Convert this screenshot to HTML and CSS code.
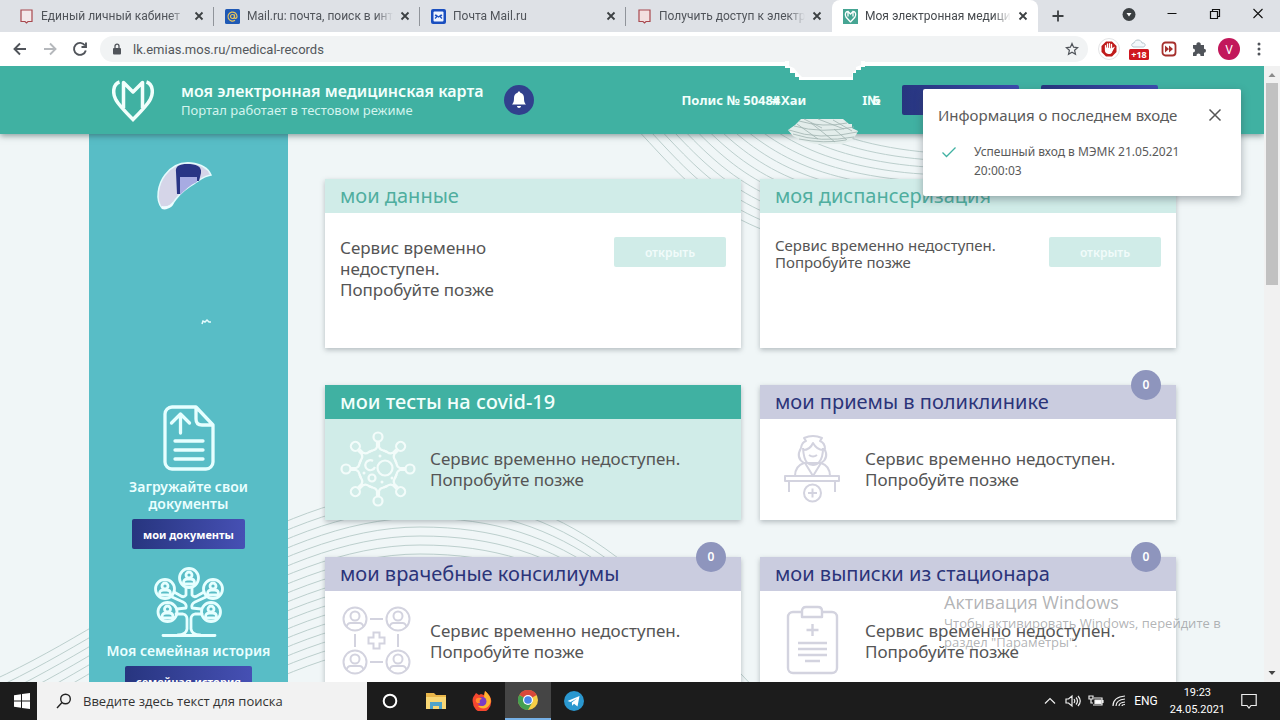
FILE: index.html
```html
<!DOCTYPE html>
<html lang="ru">
<head>
<meta charset="utf-8">
<title>Моя электронная медицинская карта</title>
<link rel="stylesheet" href="styles.css">
</head>
<body>
<div class="tabs">
  <div class="tab">
    <svg class="fav" viewBox="0 0 15 15"><path d="M2 1h11v11.500H9l-1.500 1.500L6 12.500H2z" fill="#f3e9ea" stroke="#a8484e" stroke-width="1.200"/></svg>
    <span class="tab-title">Единый личный кабинет</span>
    <button class="x" aria-label="Закрыть"><svg viewBox="0 0 10 10"><path d="M1.500 1.500l7 7m0-7l-7 7"/></svg></button>
  </div>
  <div class="tab">
    <svg class="fav" viewBox="0 0 15 15"><rect width="15" height="15" rx="1.500" fill="#1f59b5"/><g fill="none" stroke="#e8c35c" stroke-width="1.200"><circle cx="7.500" cy="7.500" r="2"/><path d="M9.500 5.500v2.800c0 1.700 2.500 1.400 2.500-.8a4.500 4.500 0 1 0-2 3.800"/></g></svg>
    <span class="tab-title">Mail.ru: почта, поиск в интернете</span>
    <button class="x" aria-label="Закрыть"><svg viewBox="0 0 10 10"><path d="M1.500 1.500l7 7m0-7l-7 7"/></svg></button>
  </div>
  <div class="tab">
    <svg class="fav" viewBox="0 0 15 15"><rect width="15" height="15" rx="2" fill="#1a4fc0"/><rect x="2.500" y="2.500" width="10" height="10" rx="1" fill="#eef4ff"/><path d="M4 6l2 1.500L4 9.500M11 6L9 7.500l2 2M4.500 5.800L7.500 8l3-2.200" fill="none" stroke="#1a4fc0" stroke-width="1.200"/></svg>
    <span class="tab-title">Почта Mail.ru</span>
    <button class="x" aria-label="Закрыть"><svg viewBox="0 0 10 10"><path d="M1.500 1.500l7 7m0-7l-7 7"/></svg></button>
  </div>
  <div class="tab last">
    <svg class="fav" viewBox="0 0 15 15"><path d="M2 1h11v11.500H9l-1.500 1.500L6 12.500H2z" fill="#f3e0e0" stroke="#a8484e" stroke-width="1.200"/></svg>
    <span class="tab-title">Получить доступ к электронной</span>
    <button class="x" aria-label="Закрыть"><svg viewBox="0 0 10 10"><path d="M1.500 1.500l7 7m0-7l-7 7"/></svg></button>
  </div>
  <div class="tab active">
    <svg class="fav" viewBox="0 0 15 15"><rect width="15" height="15" fill="#46a593"/><path d="M7.500 13L3 8C1.500 5.500 2.500 2.500 5 2.500v5m5 0v-5c2.500 0 3.500 3 2 5.500L7.500 13M5 2.500L7.500 5 10 2.500" fill="none" stroke="#fff" stroke-width="1.300"/></svg>
    <span class="tab-title">Моя электронная медицинская</span>
    <button class="x" aria-label="Закрыть"><svg viewBox="0 0 10 10"><path d="M1.500 1.500l7 7m0-7l-7 7"/></svg></button>
  </div>
  <button class="newtab" aria-label="Новая вкладка"><svg viewBox="0 0 12 12"><path d="M6 .5v11M.5 6h11" stroke="#3c4043" stroke-width="1.800"/></svg></button>
  <div class="window-buttons">
    <button aria-label="Поиск вкладок"><svg viewBox="0 0 14 14"><circle cx="7" cy="7.500" r="6.500" fill="#3c4043"/><path d="M4.500 6h5L7 9.500z" fill="#fff"/></svg></button>
    <button aria-label="Свернуть"><svg viewBox="0 0 14 14"><path d="M2.500 6.500h9" stroke="#111"/></svg></button>
    <button aria-label="Развернуть"><svg viewBox="0 0 14 14" fill="none" stroke="#111" stroke-width="1.200"><path d="M2.500 4.500h7v7h-7zM4.500 4.500v-2h7v7h-2"/></svg></button>
    <button aria-label="Закрыть окно"><svg viewBox="0 0 14 14"><path d="M2.500 2l9 9m0-9l-9 9" stroke="#111" stroke-width="1.100"/></svg></button>
  </div>
</div>
<div class="toolbar">
  <button class="nav" aria-label="Назад"><svg viewBox="0 0 16 16"><path d="M14 8H2.500M8 2.500L2.500 8 8 13.500" stroke="#50545a"/></svg></button>
  <button class="nav" aria-label="Вперёд"><svg viewBox="0 0 16 16"><path d="M2 8h11.500M8 2.500L13.500 8 8 13.500" stroke="#b5b8bc"/></svg></button>
  <button class="nav" aria-label="Обновить"><svg viewBox="0 0 16 16"><path d="M13 4.500A6 6 0 1 0 13.800 9.500M14 1.500v4.500H9.500" stroke="#50545a"/></svg></button>
  <div class="omnibox">
    <svg viewBox="0 0 10 12" width="10" height="12"><rect x="1" y="5" width="8" height="6.500" rx="1" fill="#50545a"/><path d="M3 5V3.200a2 2 0 0 1 4 0V5" fill="none" stroke="#50545a" stroke-width="1.300"/></svg>
    <input class="url" type="text" aria-label="Адрес" value="lk.emias.mos.ru/medical-records">
    <button class="star" aria-label="Закладка"><svg viewBox="0 0 14 14"><path d="M7 1.500l1.600 3.700 4 .4-3 2.700.9 4L7 10.200l-3.500 2.100.9-4-3-2.700 4-.4z" fill="none" stroke="#50545a" stroke-width="1.200"/></svg></button>
  </div>
  <div class="extensions">
    <button aria-label="AdBlock"><svg viewBox="0 0 22 22"><circle cx="11" cy="11" r="10.500" fill="#fff" stroke="#e3e3e5"/><path d="M8 3.500h6l4.500 4.500v6L14 18.500H8L3.500 14V8z" fill="#c01b1b"/><path d="M7.500 10.500V7.700M9.500 10V6M11.500 10V5.700M13.500 10.500V6.500M7.500 10v2c0 4 6 4.500 6.300 1.200L15.500 10l-2 1z" fill="#fff" stroke="#fff" stroke-width="1.300" stroke-linecap="round"/></svg></button>
    <button aria-label="Погода"><svg viewBox="0 0 22 22"><path d="M6 9c-3 0-3-4 0-4 1-4 7-4 8 0 4-.5 4 4 1 4z" fill="#f3f8fb" stroke="#b5c5cc"/><rect x="1" y="11" width="20" height="11" rx="1.500" fill="#cf1720"/></svg><span class="ext-badge">+18</span></button>
    <button aria-label="Ускорение"><svg viewBox="0 0 22 22"><rect x="4.500" y="4.500" width="13" height="13" rx="3" fill="#fff" stroke="#a6302d" stroke-width="1.800"/><path d="M7 7.500l4 3.500-4 3.500zm4 0l4 3.500-4 3.500z" fill="#a6302d"/></svg></button>
    <button aria-label="Расширения"><svg viewBox="0 0 22 22"><path d="M5 7h3.500a2.200 2.200 0 1 1 4.200 0H16v3.700a2 2 0 1 1 0 4V18h-3.600a2 2 0 1 0-3.800 0H5v-3.500a2 2 0 0 0 0-4z" fill="#50545a"/></svg></button>
    <button class="profile" aria-label="Профиль">V</button>
    <button aria-label="Меню"><svg viewBox="0 0 22 22" fill="#50545a"><circle cx="11" cy="6" r="1.500"/><circle cx="11" cy="11" r="1.500"/><circle cx="11" cy="16" r="1.500"/></svg></button>
  </div>
</div>

<div class="viewport">
  <div class="page">
    <svg class="waves" viewBox="0 0 1264 616" preserveAspectRatio="xMidYMin slice">
      <defs>
        <path id="sag" d="M634 60C690 120 725 165 830 181S1000 170 1110 110"/>
        <path id="hill" d="M-20 620C120 560 270 425 420 425S640 500 790 660"/>
      </defs>
      <g fill="none" stroke="#bccfcd">
        <use href="#sag"/><use href="#sag" x="5" y="-7"/><use href="#sag" x="10" y="-14"/><use href="#sag" x="15" y="-21"/><use href="#sag" x="20" y="-28"/><use href="#sag" x="25" y="-35"/><use href="#sag" x="30" y="-42"/><use href="#sag" x="35" y="-49"/><use href="#sag" x="40" y="-56"/><use href="#sag" x="45" y="-63"/><use href="#sag" x="50" y="-70"/><use href="#sag" x="55" y="-77"/><use href="#sag" x="60" y="-84"/><use href="#sag" x="65" y="-91"/><use href="#sag" x="70" y="-98"/>
        <use href="#hill"/><use href="#hill" y="9"/><use href="#hill" y="18"/><use href="#hill" y="27"/><use href="#hill" y="36"/><use href="#hill" y="45"/><use href="#hill" y="54"/><use href="#hill" y="63"/><use href="#hill" y="72"/><use href="#hill" y="81"/><use href="#hill" y="90"/><use href="#hill" y="99"/><use href="#hill" y="108"/><use href="#hill" y="117"/><use href="#hill" y="126"/><use href="#hill" y="135"/><use href="#hill" y="144"/><use href="#hill" y="153"/>
      </g>
    </svg>
    <header class="header">
      <svg class="logo" viewBox="0 0 42 43"><g fill="none" stroke="#f2fffc" stroke-width="3.500"><path d="M7.500 3C1 5 .5 14 3.500 20c3 6 10 13 17.500 20.500C28.500 33 35.500 26 38.500 20c3-6 2.500-15-4-17"/><path d="M11.500 29V3.500L21 13l9.500-9.500V29" stroke-linejoin="round"/></g></svg>
      <div class="brand">
        <h1>моя электронная медицинская карта</h1>
        <p>Портал работает в тестовом режиме</p>
      </div>
      <button class="bell" aria-label="Уведомления"><svg viewBox="0 0 16 18"><path d="M8 .5c1 0 1.300.7 1.300 1.300C12 2.500 13 4.500 13 7c0 4 .8 5 2 6.500H1C2.200 12 3 11 3 7c0-2.500 1-4.500 3.700-5.200C6.700 1.200 7 .5 8 .5zM6 15h4c0 2.500-4 2.500-4 0z" fill="#fff"/></svg></button>
      <div class="policy"><span>Полис № 504</span><span>84</span><span class="over">#&#8202;Хаи</span></div>
      <div class="policy-tail"><span>I№</span><span class="over">6</span></div>
      <button class="account" aria-label="Профиль пациента"></button>
      <button class="account" aria-label="Выход"></button>
    </header>
    <main class="main">
      <aside class="sidebar">
        <svg class="avatar" viewBox="0 0 199 271"><path d="M73 74C66 66 69 50 76 41c6-8 15-13 26-12 10 1 17 5 20 12-7 1-10 4-16 8-7 4-14 9-19 16-3 5-8 9-14 9z" fill="#d5d5e8" stroke="#e4fbfd" stroke-width="1.500"/><path d="M88 60l-1-22c-1-6 4-8 11-8 9 0 15 2 14 9l-2 8H91v13z" fill="#293585"/><path d="M91 43h17v5c-7 3-12 8-17 13z" fill="#a7abe2"/><path d="M73 72c6 1 9-1 11-4 3 3-6 9-11 7" fill="#effdff"/><path d="M113 190l1-3 2 1 2-2 2 2h2" fill="none" stroke="#e4fbfd" stroke-width="1.500"/></svg>
        <section class="side-item">
          <svg width="52" height="66" viewBox="0 0 52 66"><g fill="none" stroke="#e6ffff" stroke-width="3.300" stroke-linecap="round" stroke-linejoin="round"><path d="M9 2h24l17 18v37a7 7 0 0 1-7 7H9a7 7 0 0 1-7-7V9a7 7 0 0 1 7-7zM33 2v12q0 6 6 6h11M17.500 28V9M8.500 18l9-9 9 9M12 36h28M12 45h28M12 54h28"/></g></svg>
          <p>Загружайте свои<br>документы</p>
          <button class="cta">мои документы</button>
        </section>
        <section class="side-item">
          <svg width="70" height="70" viewBox="0 0 70 70"><defs><g id="head"><circle r="9.500"/><circle cy="-3" r="3"/><path d="M-5.500 6v-1q0-4 4-4h3q4 0 4 4v1z"/></g></defs><g fill="none" stroke="#e6ffff" stroke-width="2.800" stroke-linejoin="round" stroke-linecap="round"><use href="#head" x="35" y="11"/><use href="#head" x="11" y="22"/><use href="#head" x="59" y="22"/><use href="#head" x="13.500" y="45"/><use href="#head" x="57" y="45"/><path d="M32 21v7q-2 3-5 1l-7-4M38 21v7q2 3 5 1l7-4M18 30l11 5q4 2 3 6l-9 1M52 30l-11 5q-4 2-3 6l9 1M22 47h7q4 1 4 5v10q-1 6-9 6M48 47h-7q-4 1-4 5v10q1 6 9 6M9 68.500h52"/></g></svg>
          <p>Моя семейная история</p>
          <button class="cta">семейная история</button>
        </section>
      </aside>
      <div class="cards">
        <article class="card mint tall">
          <h2>мои данные</h2>
          <div class="body"><p class="narrow">Сервис временно недоступен. Попробуйте позже</p><button class="open" disabled>открыть</button></div>
        </article>
        <article class="card mint tall">
          <h2>моя диспансеризация</h2>
          <div class="body"><p class="small">Сервис временно недоступен. Попробуйте позже</p><button class="open" disabled>открыть</button></div>
        </article>
        <article class="card covid">
          <h2>мои тесты на covid-19</h2>
          <div class="body">
            <svg class="pic" viewBox="0 0 76 76"><defs><g id="spike"><circle cx="38" cy="6" r="4.500"/><path d="M37 11v5q-1 3-4.500 3.500L28.800 21M39 11v5q1 3 4.500 3.500L47.200 21"/></g></defs><g fill="none" stroke="#f3fcfa" stroke-width="2.200"><use href="#spike"/><use href="#spike" transform="rotate(45 38 38)"/><use href="#spike" transform="rotate(90 38 38)"/><use href="#spike" transform="rotate(135 38 38)"/><use href="#spike" transform="rotate(180 38 38)"/><use href="#spike" transform="rotate(225 38 38)"/><use href="#spike" transform="rotate(270 38 38)"/><use href="#spike" transform="rotate(315 38 38)"/><circle cx="45" cy="37" r="7.500"/><path d="M33 30a5 5 0 1 0 2 6"/><circle cx="32" cy="47" r="3.500"/></g><g fill="#f3fcfa"><circle cx="40" cy="25" r="1.500"/><circle cx="42" cy="51" r="1.500"/><circle cx="24" cy="42" r="1.500"/><circle cx="52" cy="47" r="1.500"/></g></svg>
            <p>Сервис временно недоступен.<br>Попробуйте позже</p>
          </div>
        </article>
        <article class="card lilac">
          <h2>мои приемы в поликлинике</h2><span class="count">0</span>
          <div class="body">
            <svg class="pic" viewBox="0 0 76 76"><g fill="none" stroke="#d3d3df" stroke-width="2" stroke-linejoin="round"><rect x="10" y="45" width="54" height="5"/><path d="M14 50v11M60 50v11M20 45q0-10 9-13h17q9 3 9 13M30 32l8 13 8-13M26 17c-4 7-2 12 3 15M49 17c4 7 2 12-3 15M28 17c1 17 7 17 10 17s10-2 10-17M28 19q7 0 10-7 4 7 10 7M26 17q1-6 5-7l-2-3q9-4 18 0l-2 3q5 2 5 8M34 24q4 3 8 0"/><circle cx="37.500" cy="62" r="8.500"/><path d="M37.500 57.500v9M33 62h9"/></g></svg>
            <p>Сервис временно недоступен.<br>Попробуйте позже</p>
          </div>
        </article>
        <article class="card lilac">
          <h2>мои врачебные консилиумы</h2><span class="count">0</span>
          <div class="body">
            <svg class="pic" viewBox="0 0 76 76"><defs><g id="doc"><circle r="11.500"/><circle cy="-3" r="4.500"/><path d="M-8.500 8q1-4 4-4h9q3 0 4 4"/></g></defs><g fill="none" stroke="#d3d3df" stroke-width="2"><use href="#doc" x="15" y="16"/><use href="#doc" x="58" y="16"/><use href="#doc" x="15" y="59"/><use href="#doc" x="58" y="59"/><path d="M30 16h13M30 59h13M15 31v13M58 31v13M33.500 29.500h6v5h5v6h-5v5h-6v-5h-5v-6h5z"/></g></svg>
            <p>Сервис временно недоступен.<br>Попробуйте позже</p>
          </div>
        </article>
        <article class="card lilac">
          <h2>мои выписки из стационара</h2><span class="count">0</span>
          <div class="body">
            <svg class="pic" viewBox="0 0 76 76"><g fill="none" stroke="#d3d3df" stroke-width="2.400" stroke-linejoin="round"><path d="M27 9H18a5 5 0 0 0-5 5v51a5 5 0 0 0 5 5h39a5 5 0 0 0 5-5V14a5 5 0 0 0-5-5h-9"/><path d="M27 14V8q0-4 4-4h12q4 0 4 4v6zM37.500 21v12M31.500 27h12M23 40h29M23 46h29M23 52h29M30 58h15"/></g></svg>
            <p>Сервис временно недоступен.<br>Попробуйте позже</p>
          </div>
        </article>
      </div>
    </main>
    <svg class="smudge low" viewBox="0 0 76 28"><path d="M14 1h42l6 5h3v4l6 3-2 4-6 6-8 3H28l-12-3L6 18 1 12l7-5z" fill="#e3edeb"/><g fill="none" stroke="#9fb3b0" stroke-width=".8"><path d="M12 3q24 7 48 2M7 8q28 8 60 1M2 12q30 11 68 2M6 16q27 9 61 3M12 21q25 5 47 1M17 1l18 9M31 1l26 10M46 2l19 11M10 6l21 15M24 5l24 19M47 11l13 11"/></g></svg>
    <div class="toast" role="status">
      <div class="toast-head"><h3>Информация о последнем входе</h3><button aria-label="Закрыть"><svg viewBox="0 0 14 14"><path d="M1.500 1.500l11 11m0-11l-11 11" stroke="#555" stroke-width="1.500"/></svg></button></div>
      <div class="toast-row"><svg viewBox="0 0 16 12"><path d="M1.500 6.500l4 4 9-9" fill="none" stroke="#40b1a2" stroke-width="1.300"/></svg><p>Успешный вход в МЭМК 21.05.2021 20:00:03</p></div>
    </div>
    <div class="watermark"><strong>Активация Windows</strong><p>Чтобы активировать Windows, перейдите в раздел "Параметры".</p></div>
  </div>
  <svg class="smudge top" viewBox="0 0 80 20"><path d="M0 0h80v6h-4v3h-5v3h-3v7H14v-3h-4v-4H5V7H0z" fill="#fff"/><path d="M4 0h72v4l-5 2v3l-4 3v4H17l-4-4-4-5-5-2z" fill="#f1f3f4"/></svg>
  <div class="scrollbar">
    <svg viewBox="0 0 16 16"><path d="M4.500 10h7L8 6z" fill="#8c8c8c"/></svg>
    <div class="thumb"></div>
    <svg viewBox="0 0 16 16"><path d="M4.500 6h7L8 10z" fill="#444"/></svg>
  </div>
</div>

<footer class="taskbar">
  <button class="start" aria-label="Пуск"><svg viewBox="0 0 16 16" fill="#fff"><path d="M0 2.300l7-1v6.200H0zM8 1.100L16 0v7.500H8zM0 8.500h7v6.200l-7-1zM8 8.500h8V16l-8-1.100z"/></svg></button>
  <label class="search"><svg viewBox="0 0 16 16"><circle cx="9.500" cy="6" r="4.800" fill="none" stroke="#222" stroke-width="1.400"/><path d="M6 9.500L1 15" stroke="#222" stroke-width="1.400"/></svg><input type="text" placeholder="Введите здесь текст для поиска" aria-label="Поиск"></label>
  <div class="apps">
    <button aria-label="Кортана"><svg viewBox="0 0 20 20"><circle cx="10" cy="10" r="6.300" fill="none" stroke="#fff" stroke-width="2"/></svg></button>
    <button aria-label="Проводник"><svg viewBox="0 0 20 20"><path d="M0 2h8l2 2h10v14H0z" fill="#e9b64a"/><path d="M0 6h20v12H0z" fill="#f8d775"/><path d="M4 11h12v7h-3v-3H7v3H4z" fill="#4fa3c9"/></svg></button>
    <button aria-label="Firefox"><svg viewBox="0 0 20 20"><path d="M2 5l2-3 3 2 2-1 3 1 1-4c5 4 7 8 6 12a9 9 0 0 1-18 0C0 9 1 6 2 5z" fill="#f4472f"/><path d="M13 0c5 4 7 9 5 13-3 6-10 5-12 2 8 1 10-5 6-9z" fill="#fdb62f"/><circle cx="10" cy="10.500" r="4.500" fill="#7b3cc4"/><path d="M4 8c3-2 5-1 6 0-2 0-3 2-2 4-3 1-5-1-4-4z" fill="#ff8b2d"/></svg></button>
    <button class="current" aria-label="Chrome"><svg viewBox="0 0 20 20"><circle cx="10" cy="10" r="10" fill="#f7ce46"/><path d="M10 10L1.300 5A10 10 0 0 1 18.700 5z" fill="#d9483b"/><path d="M10 10L1.300 5A10 10 0 0 0 10 20l4.500-8z" fill="#459f51"/><circle cx="10" cy="10" r="5" fill="#fff"/><circle cx="10" cy="10" r="3.800" fill="#4a84e8"/></svg></button>
    <button aria-label="Telegram"><svg viewBox="0 0 20 20"><circle cx="10" cy="10" r="10" fill="#2a97cf"/><path d="M3.500 10L15.500 5l-2 10.500-3.500-2.700-1.800 1.900-.4-3.200L13 7.500 6.500 11z" fill="#fff"/></svg></button>
  </div>
  <div class="tray">
    <svg viewBox="0 0 16 16"><path d="M3 10.500l5-5 5 5"/></svg>
    <svg viewBox="0 0 16 16"><path d="M1 6h2.500L7 3v10L3.500 10H1zM9 6q1.500 2 0 4M11 4.500q3 3.500 0 7M13 3q4.500 5 0 10"/></svg>
    <svg viewBox="0 0 16 16"><path d="M1 3h4v3H1zM3 6v4h2M6 5h8v7H5M15 7v3"/><path d="M7 7h6v3.500H7z" fill="#fff"/></svg>
    <svg viewBox="0 0 16 16"><path d="M2 13Q2 4 14 3M5 13q0-6 9-7M8 13q0-3.500 6-4M11 13q0-1.500 3-1.500"/></svg>
    <span class="lang">ENG</span>
    <div class="clock"><span>19:23</span><span>24.05.2021</span></div>
    <svg class="note" viewBox="0 0 16 16"><path d="M.8 1.500h14.400v11H10l-2 2.500-2-2.500H.8z"/></svg>
  </div>
</footer>
</body>
</html>
```
FILE: styles.css
```css
* { box-sizing: border-box; }
body {
  margin: 0;
  height: 100vh;
  display: flex;
  flex-direction: column;
  overflow: hidden;
  font-family: "Noto Sans", "Open Sans", sans-serif;
  color: #555;
}
button { border: 0; padding: 0; background: none; font: inherit; color: inherit; }
input { border: 0; padding: 0; background: none; font: inherit; outline: 0; min-width: 0; }
h1, h2, h3, p { margin: 0; font-weight: 400; }
svg { display: block; flex: none; }

/* Browser window */
.tabs { display: flex; height: 32px; padding-left: 8px; background: #dee1e6; flex: none; }
.tab {
  display: flex; align-items: center; gap: 7px;
  flex: 0 1 206px; min-width: 0; padding: 0 10px 0 11px;
  position: relative; font-size: 12px; color: #50545a;
  font-family: Roboto, "Noto Sans", sans-serif;
}
.tab:not(.last):not(.active)::after { content: ""; width: 1px; height: 19px; background: #90949a; position: absolute; right: 0; top: 7px; }
.tab.active { background: #fff; border-radius: 8px 8px 0 0; color: #45494d; }
.fav { width: 15px; height: 15px; }
.tab-title { flex: 1; overflow: hidden; white-space: nowrap; mask-image: linear-gradient(90deg, #000 88%, transparent); }
.x svg { width: 10px; height: 10px; stroke: #3c4043; stroke-width: 1.8; }
.newtab { width: 12px; margin-left: 14px; }
.window-buttons { display: flex; align-items: center; gap: 29px; margin-left: auto; padding: 0 15px 4px 0; }
.window-buttons svg { width: 14px; height: 14px; }
.toolbar { display: flex; align-items: center; height: 34px; background: #fff; flex: none; padding: 0 10px 0 12px; gap: 14px; }
.nav svg { width: 16px; height: 16px; fill: none; stroke-width: 1.9; }
.omnibox { display: flex; align-items: center; gap: 11px; flex: 1; height: 26px; margin-left: -2px; padding: 0 9px 0 12px; border-radius: 13px; background: #f1f3f4; }
.url { flex: 1; font-size: 13px; color: #53575b; font-family: Roboto, sans-serif; }
.star svg { width: 14px; height: 14px; }
.extensions { display: flex; align-items: center; gap: 8px; margin-left: -4px; }
.extensions button { position: relative; width: 22px; height: 22px; }
.ext-badge { position: absolute; left: 0; right: 0; bottom: -1px; font-size: 9px; line-height: 12px; font-weight: 700; color: #fff; text-align: center; }
.extensions .profile { border-radius: 50%; background: #c2185b; color: #fff; font-size: 12px; }

/* Portal */
.viewport { position: relative; display: flex; flex: 1; min-height: 0; }
.page { position: relative; flex: 1; min-width: 0; overflow: hidden; background: #f0f6f7; }
.waves { position: absolute; inset: 0; width: 100%; height: 100%; }
.header {
  position: relative; z-index: 1; display: flex; align-items: center; height: 68px;
  padding: 0 106px 0 112px; background: #40b1a2; color: #f2fffc;
  box-shadow: 0 2px 6px rgba(40, 70, 70, .5);
}
.logo { width: 42px; height: 43px; }
.brand { margin-left: 27px; white-space: nowrap; }
.brand h1 { font-size: 16px; line-height: 20px; font-weight: 600; }
.brand p { font-size: 13px; line-height: 18px; color: #d3f4ee; }
.bell { display: grid; place-items: center; width: 30px; height: 30px; margin-left: 20px; border-radius: 50%; background: #31408d; }
.bell svg { width: 16px; height: 18px; }
.policy, .policy-tail { font-size: 13px; font-weight: 700; white-space: nowrap; }
.policy { margin-left: auto; }
.policy .over { margin-left: -9px; }
.policy-tail { margin-left: 56px; }
.policy-tail .over { margin-left: -8px; }
.account { width: 117px; height: 30px; margin-left: 22px; border-radius: 2px; background: linear-gradient(90deg, #27357f, #3c4bb0); }
.main { position: relative; display: flex; align-items: flex-start; gap: 37px; padding: 0 88px 0 89px; }
.sidebar { flex: 0 0 199px; min-height: 600px; background: #58bdc6; color: #eaffff; text-align: center; }
.avatar { width: 100%; }
.side-item { display: flex; flex-direction: column; align-items: center; margin-bottom: 18px; }
.side-item p { margin: 7px 0; font-size: 14px; line-height: 17px; font-weight: 600; white-space: nowrap; }
.side-item + .side-item p { margin: 5px 0 7px; }
.cta { height: 30px; padding: 0 11px; border-radius: 2px; font-size: 11px; font-weight: 700; color: #fff; background: linear-gradient(90deg, #27357f, #4650b4); }
.cards { flex: 1; display: grid; grid-template-columns: 1fr 1fr; column-gap: 19px; row-gap: 37px; padding-top: 45px; }
.card { position: relative; min-height: 135px; background: #fff; box-shadow: 0 2px 5px rgba(70, 80, 90, .35); }
.card.tall { min-height: 169px; }
.card h2 { padding: 0 15px; font-size: 20px; line-height: 34px; white-space: nowrap; }
.card .body { display: flex; align-items: center; gap: 14px; padding: 12px 15px; font-size: 17px; line-height: 21px; }
.card.mint h2 { background: #d0ece8; color: #4fae9f; }
.card.mint .body { align-items: flex-start; justify-content: space-between; padding-top: 24px; }
.narrow { width: 180px; }
.small { width: 240px; font-size: 15px; line-height: 17px; }
.open { width: 112px; height: 30px; border-radius: 2px; background: #d0ece8; color: #f1fbfa; font-size: 12px; font-weight: 600; }
.covid { background: #d0ece8; }
.covid h2 { background: #40b1a2; color: #f2fffc; font-weight: 500; }
.lilac h2 { background: #caccdf; color: #2b3479; }
.pic { width: 76px; height: 76px; }
.count { position: absolute; right: 15px; top: -15px; width: 30px; height: 30px; border-radius: 50%; background: #8e95bd; color: #fff; font-size: 12px; line-height: 30px; font-weight: 600; text-align: center; }
.smudge { position: absolute; z-index: 2; }
.smudge.top { left: 785px; top: -5px; width: 80px; }
.smudge.low { left: 787px; top: 52px; width: 76px; }
.toast { position: absolute; z-index: 3; right: 23px; top: 23px; width: 318px; padding: 16px 15px; background: #fff; border-radius: 2px; box-shadow: 0 3px 8px rgba(50, 60, 70, .4); color: #5a5a5a; }
.toast-head { display: flex; justify-content: space-between; align-items: center; padding-right: 4px; }
.toast h3 { font-size: 15px; line-height: 20px; }
.toast-head svg { width: 14px; height: 14px; }
.toast-row { display: flex; gap: 17px; margin-top: 17px; font-size: 12px; line-height: 19px; padding: 0 30px 0 3px; }
.toast-row svg { width: 16px; height: 12px; margin-top: 4px; }
.watermark { position: absolute; left: 944px; bottom: 30px; width: 290px; color: rgba(130, 132, 135, .62); font-size: 13px; line-height: 19px; font-family: "Open Sans", sans-serif; }
.watermark strong { display: block; font-size: 18px; line-height: 23px; font-weight: 400; }
.scrollbar { display: flex; flex-direction: column; flex: 0 0 16px; background: #f1f1f1; padding: 1px 0; align-items: center; }
.scrollbar svg { width: 16px; height: 16px; }
.thumb { width: 12px; height: 202px; margin-bottom: auto; background: #c1c1c1; }

/* Taskbar */
.taskbar { display: flex; align-items: stretch; flex: none; height: 38px; background: #1c1c1c; color: #fff; font-family: "Open Sans", sans-serif; }
.start { display: grid; place-items: center; width: 37px; padding-left: 7px; }
.start svg { width: 16px; height: 16px; }
.search { display: flex; align-items: center; gap: 11px; width: 330px; padding: 0 18px 0 19px; background: #f2f2f2; }
.search svg { width: 16px; height: 16px; }
.search input { flex: 1; font-size: 13px; color: #333; }
.search input::placeholder { color: #333; }
.apps { display: flex; }
.apps button { display: grid; place-items: center; width: 46px; }
.apps svg { width: 20px; height: 20px; }
.apps .current { background: #454545; border-bottom: 2px solid #76b0e6; }
.tray { display: flex; align-items: center; gap: 7px; margin-left: auto; padding-right: 23px; font-size: 12px; font-family: Roboto, sans-serif; }
.tray svg { width: 16px; height: 16px; fill: none; stroke: #eee; stroke-width: 1.2; }
.clock { display: flex; flex-direction: column; text-align: center; font-size: 11px; line-height: 17px; margin: 0 9px 0 5px; }
```
